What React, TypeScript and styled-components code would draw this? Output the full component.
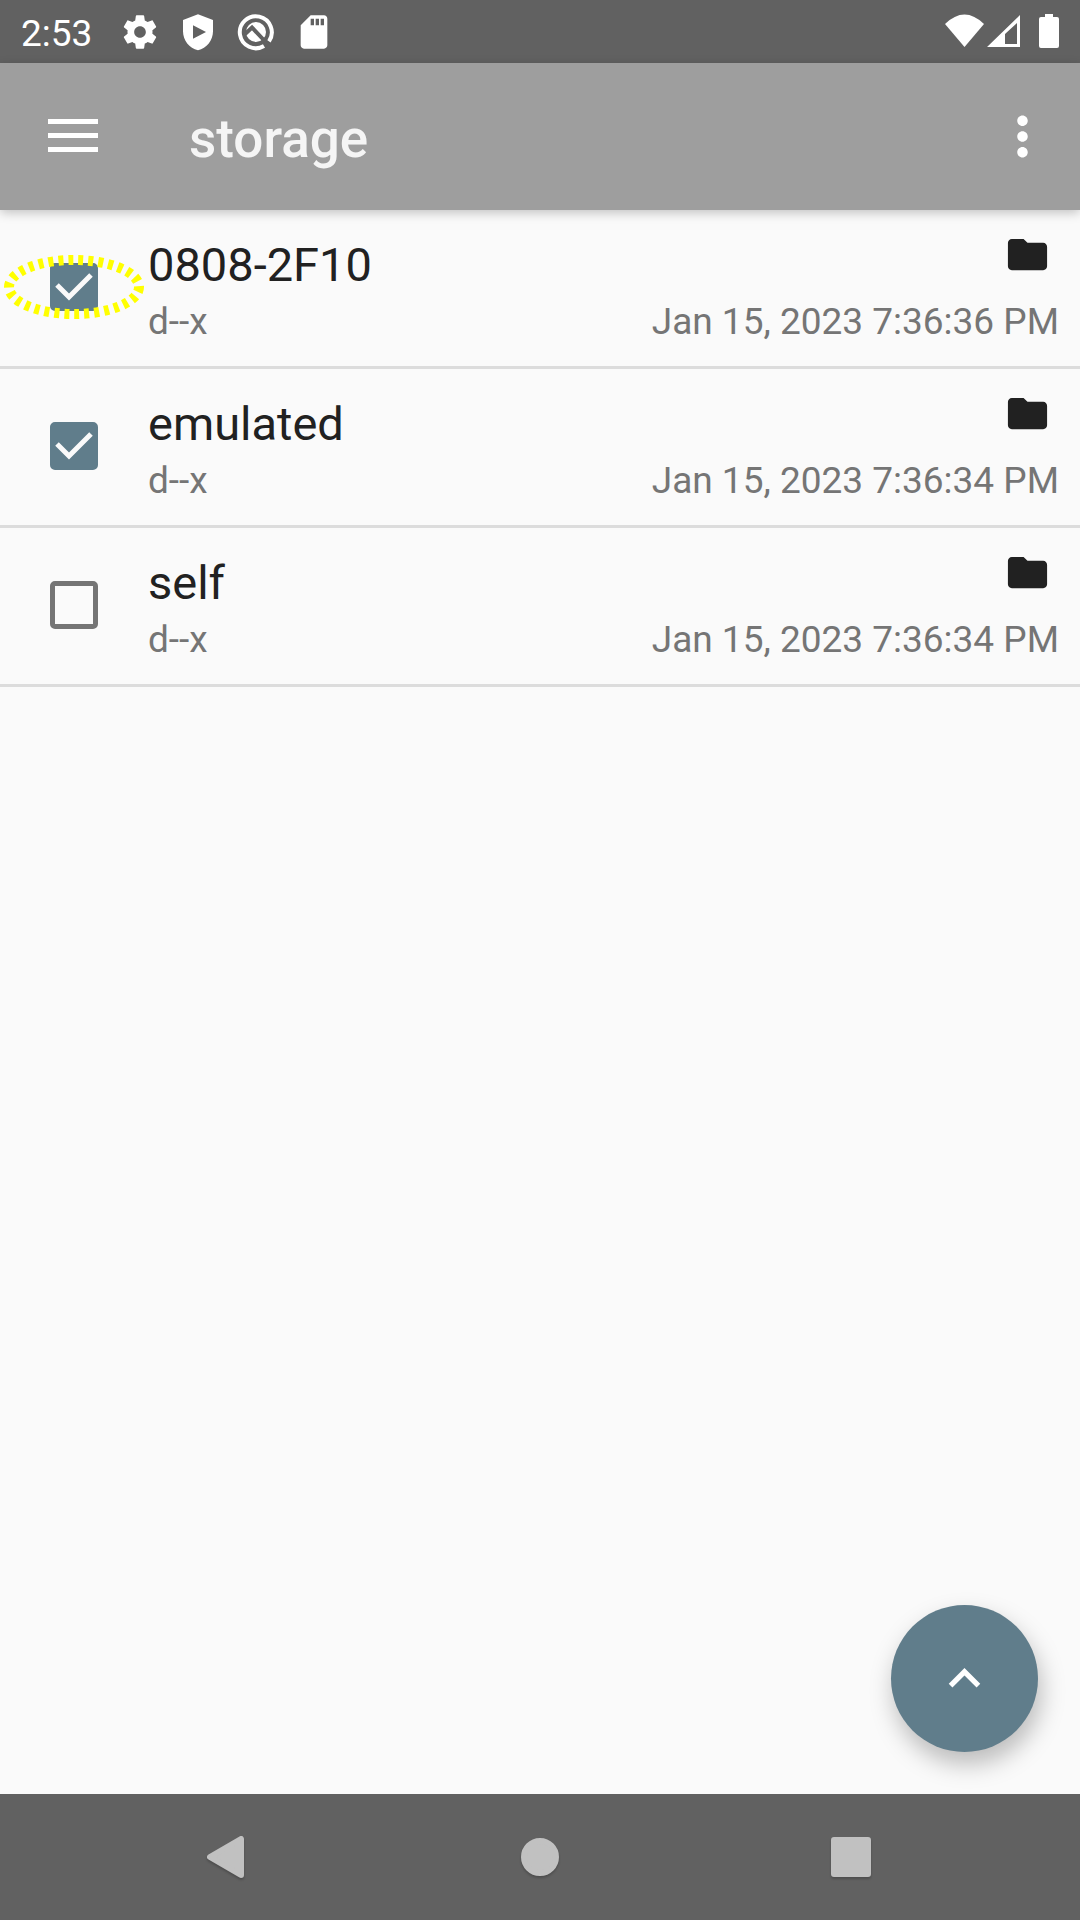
import React, { useState } from "react";
import styled, { createGlobalStyle } from "styled-components";

const GlobalStyle = createGlobalStyle`
  *, *::before, *::after { box-sizing: border-box; }
  body {
    margin: 0;
    background: #fafafa;
    font-family: Roboto, "Noto Sans", sans-serif;
  }
`;

const Screen = styled.div`
  display: flex;
  flex-direction: column;
  min-height: 100vh;
  background: #fafafa;
`;

const StatusBar = styled.div`
  display: flex;
  align-items: center;
  height: 63px;
  padding: 0 19px 0 21px;
  background: #616161;
  color: #fff;
`;

const Clock = styled.time`
  width: 99px;
  padding-top: 4px;
  font-size: 37px;
  line-height: 44px;
`;

const Notifications = styled.div`
  display: flex;
  flex: 1;
  gap: 18px;
`;

const StatusIcon = styled.svg`
  display: block;
  width: 40px;
  height: 40px;
  fill: #fff;
`;

const SystemIcons = styled.svg`
  display: block;
  width: 120px;
  height: 40px;
  fill: #fff;
`;

const Toolbar = styled.header`
  position: relative;
  display: flex;
  align-items: center;
  height: 147px;
  padding: 0 26px 0 42px;
  background: #9e9e9e;
  box-shadow: 0 3px 10px rgba(0, 0, 0, 0.22);
`;

const ToolButton = styled.button`
  display: flex;
  padding: 0;
  border: 0;
  background: none;
  cursor: pointer;
`;

const ToolIcon = styled.svg`
  display: block;
  width: 63px;
  height: 63px;
  fill: #fff;
`;

const Title = styled.h1`
  flex: 1;
  margin: 0;
  padding: 4px 0 0 84px;
  color: #f5f5f5;
  font-size: 53px;
  line-height: 62px;
  font-weight: 500;
`;

const FileList = styled.ul`
  flex: 1;
  margin: 0;
  padding: 0;
  list-style: none;
`;

const FileRow = styled.li`
  display: flex;
  align-items: center;
  height: 159px;
  padding-right: 21px;
  border-bottom: 3px solid #dcdcdc;
`;

const CheckCell = styled.div`
  position: relative;
  display: flex;
  justify-content: center;
  width: 148px;
  margin-bottom: 2px;
`;

const CheckBox = styled.input`
  appearance: none;
  width: 48px;
  height: 48px;
  margin: 0;
  border: 5px solid #757575;
  border-radius: 5px;
  background: transparent;
  cursor: pointer;

  &:checked {
    border-color: #607d8b;
    background-color: #607d8b;
  }
`;

const CheckMark = styled.svg`
  position: absolute;
  inset: 0;
  margin: auto;
  width: 48px;
  height: 48px;
  fill: none;
  stroke: #fafafa;
  stroke-width: 5;
  pointer-events: none;
`;

const Highlight = styled.svg`
  position: absolute;
  inset: 0;
  margin: auto;
  width: 148px;
  height: 64px;
  fill: none;
  stroke: #ff0;
  stroke-width: 10;
  stroke-dasharray: 5 5;
  pointer-events: none;
`;

const FileInfo = styled.label`
  display: flex;
  flex: 1;
  flex-direction: column;
  padding-top: 3px;
`;

const InfoLine = styled.span`
  display: flex;
  justify-content: space-between;
`;

const FileName = styled.span`
  color: #212121;
  font-size: 47px;
  line-height: 64px;
`;

const Detail = styled.span`
  color: #757575;
  font-size: 37px;
  line-height: 49px;
`;

const FolderIcon = styled.svg`
  display: block;
  width: 47px;
  height: 47px;
  margin-right: 8px;
  fill: #212121;
`;

const UpButton = styled.button`
  display: flex;
  align-items: center;
  justify-content: center;
  align-self: flex-end;
  width: 147px;
  height: 147px;
  margin: 0 42px 42px 0;
  padding: 0;
  border: 0;
  border-radius: 50%;
  background: #607d8b;
  box-shadow: 3px 12px 24px rgba(0, 0, 0, 0.26);
  cursor: pointer;
`;

const NavBar = styled.nav`
  position: relative;
  display: flex;
  align-items: center;
  justify-content: center;
  gap: 101px;
  height: 126px;
  background: #616161;
`;

const NavButton = styled.button`
  display: flex;
  justify-content: center;
  width: 210px;
  padding: 0;
  border: 0;
  background: none;
  cursor: pointer;
`;

const NavIcon = styled.svg`
  display: block;
  width: 56px;
  height: 56px;
  fill: #c1c1c1;
  stroke: #c1c1c1;
  stroke-width: 6;
  stroke-linejoin: round;
  filter: drop-shadow(0 2px 1px rgba(0, 0, 0, 0.2));
`;

type Entry = { name: string; mode: string; modified: string; selected: boolean };

const entries: Entry[] = [
  { name: "0808-2F10", mode: "d--x", modified: "Jan 15, 2023 7:36:36 PM", selected: true },
  { name: "emulated", mode: "d--x", modified: "Jan 15, 2023 7:36:34 PM", selected: true },
  { name: "self", mode: "d--x", modified: "Jan 15, 2023 7:36:34 PM", selected: false },
];

function FileItem({ entry, focused }: { entry: Entry; focused: boolean }) {
  const [checked, setChecked] = useState(entry.selected);
  const id = `file-${entry.name}`;
  return (
    <FileRow>
      <CheckCell>
        <CheckBox
          type="checkbox"
          id={id}
          checked={checked}
          onChange={(e) => setChecked(e.target.checked)}
        />
        {checked && (
          <CheckMark viewBox="0 0 48 48" aria-hidden="true">
            <path d="M7 22 L19 34 L41 12" />
          </CheckMark>
        )}
        {focused && (
          <Highlight viewBox="0 0 148 64" aria-hidden="true">
            <ellipse cx="74" cy="32" rx="65" ry="27" />
          </Highlight>
        )}
      </CheckCell>
      <FileInfo htmlFor={id}>
        <InfoLine>
          <FileName>{entry.name}</FileName>
          <FolderIcon viewBox="0 1 24 24" aria-hidden="true">
            <path d="M10 4H4c-1.1 0-1.99.9-1.99 2L2 18c0 1.1.9 2 2 2h16c1.1 0 2-.9 2-2V8c0-1.1-.9-2-2-2h-8l-2-2z" />
          </FolderIcon>
        </InfoLine>
        <InfoLine>
          <Detail>{entry.mode}</Detail>
          <Detail>{entry.modified}</Detail>
        </InfoLine>
      </FileInfo>
    </FileRow>
  );
}

export default function App() {
  return (
    <Screen>
      <GlobalStyle />
      <StatusBar>
        <Clock>2:53</Clock>
        <Notifications>
          <StatusIcon viewBox="0 0 24 24" aria-hidden="true">
            <path d="M19.43 12.98c.04-.32.07-.64.07-.98s-.03-.66-.07-.98l2.11-1.65c.19-.15.24-.42.12-.64l-2-3.46c-.12-.22-.39-.3-.61-.22l-2.49 1c-.52-.4-1.08-.73-1.69-.98l-.38-2.65C14.46 2.18 14.25 2 14 2h-4c-.25 0-.46.18-.49.42l-.38 2.65c-.61.25-1.17.59-1.69.98l-2.49-1c-.23-.09-.49 0-.61.22l-2 3.46c-.13.22-.07.49.12.64l2.11 1.65c-.04.32-.07.65-.07.98s.03.66.07.98l-2.11 1.65c-.19.15-.24.42-.12.64l2 3.46c.12.22.39.3.61.22l2.49-1c.52.4 1.08.73 1.69.98l.38 2.65c.03.24.24.42.49.42h4c.25 0 .46-.18.49-.42l.38-2.65c.61-.25 1.17-.59 1.69-.98l2.49 1c.23.09.49 0 .61-.22l2-3.46c.12-.22.07-.49-.12-.64l-2.11-1.65zM12 15.5c-1.93 0-3.5-1.57-3.5-3.5s1.57-3.5 3.5-3.5 3.5 1.57 3.5 3.5-1.57 3.5-3.5 3.5z" />
          </StatusIcon>
          <StatusIcon viewBox="0 0 24 24" aria-hidden="true">
            <path
              fillRule="evenodd"
              d="M12 1.300 L3 4.800 V11.5 C3 17 6.8 21.600 12 23 C17.2 21.600 21 17 21 11.5 V4.800 Z M9 8 L16.800 12 L9 16 Z"
            />
          </StatusIcon>
          <StatusIcon viewBox="0 0 40 40" aria-hidden="true">
            <path
              d="M28 34 A16 16 0 1 1 33 29.300"
              fill="none"
              stroke="#fff"
              strokeWidth="4"
            />
            <circle cx="20" cy="20" r="10" />
            <path d="M8 23 L16 15.500 L32.500 33" fill="none" stroke="#616161" strokeWidth="4" />
          </StatusIcon>
          <StatusIcon viewBox="0 0 24 24" aria-hidden="true">
            <path d="M18 2h-8L4.02 8 4 20c0 1.1.9 2 2 2h12c1.1 0 2-.9 2-2V4c0-1.1-.9-2-2-2zm-6 6h-2V4h2v4zm3 0h-2V4h2v4zm3 0h-2V4h2v4z" />
          </StatusIcon>
        </Notifications>
        <SystemIcons viewBox="0 0 120 40" role="img" aria-label="Wi-Fi, mobile signal, battery">
          <path d="M4 12 Q23.500 -7 43 12 L23.500 35 Z" />
          <path
            fillRule="evenodd"
            d="M46 35 L79 3 V35 Z M64 22 V32 H76 V11 Z"
          />
          <path d="M104 2 h8 v3 h4 a2 2 0 0 1 2 2 v27 a2 2 0 0 1 -2 2 h-16 a2 2 0 0 1 -2 -2 v-27 a2 2 0 0 1 2 -2 h4 z" />
        </SystemIcons>
      </StatusBar>
      <Toolbar>
        <ToolButton type="button" aria-label="Open menu">
          <ToolIcon viewBox="0 0 63 63" aria-hidden="true">
            <path d="M6 14h50v5H6zM6 28h50v5H6zM6 42h50v5H6z" />
          </ToolIcon>
        </ToolButton>
        <Title>storage</Title>
        <ToolButton type="button" aria-label="More options">
          <ToolIcon viewBox="0 0 24 24" aria-hidden="true">
            <path d="M12 8c1.1 0 2-.9 2-2s-.9-2-2-2-2 .9-2 2 .9 2 2 2zm0 2c-1.100 0-2 .9-2 2s.9 2 2 2 2-.9 2-2-.9-2-2-2zm0 6c-1.100 0-2 .9-2 2s.9 2 2 2 2-.9 2-2-.9-2-2-2z" />
          </ToolIcon>
        </ToolButton>
      </Toolbar>
      <FileList>
        {entries.map((entry, index) => (
          <FileItem key={entry.name} entry={entry} focused={index === 0} />
        ))}
      </FileList>
      <UpButton type="button" aria-label="Go up">
        <ToolIcon viewBox="0 0 24 24" aria-hidden="true">
          <path d="M12 8l-6 6 1.410 1.410L12 10.830l4.590 4.580L18 14z" />
        </ToolIcon>
      </UpButton>
      <NavBar aria-label="System navigation">
        <NavButton type="button" aria-label="Back">
          <NavIcon viewBox="0 0 56 56" aria-hidden="true">
            <path d="M9 28 L40 10 V46 Z" />
          </NavIcon>
        </NavButton>
        <NavButton type="button" aria-label="Home">
          <NavIcon viewBox="0 0 56 56" aria-hidden="true">
            <circle cx="28" cy="28" r="16" />
          </NavIcon>
        </NavButton>
        <NavButton type="button" aria-label="Recent apps">
          <NavIcon viewBox="0 0 56 56" aria-hidden="true">
            <path d="M11 11h34v34H11z" />
          </NavIcon>
        </NavButton>
      </NavBar>
    </Screen>
  );
}
